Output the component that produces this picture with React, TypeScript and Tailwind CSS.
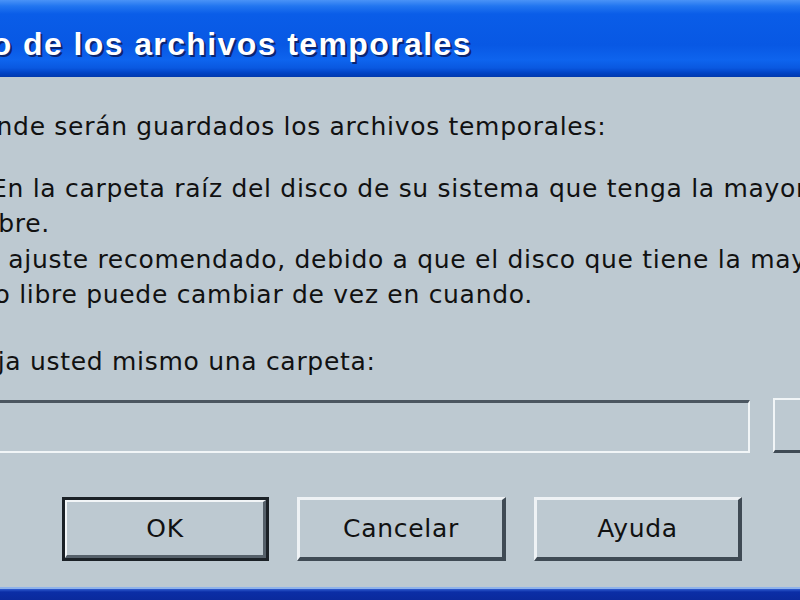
const bodyFont = "font-['DejaVu_Sans',sans-serif] text-[25px] tracking-[0.7px] leading-[35px] text-[#111111]";

function Line({ offset, children, className = "" }: { offset: string; children: React.ReactNode; className?: string }) {
  return <div className={`whitespace-nowrap ${offset} ${className}`}>{children}</div>;
}

function Button({ label, primary = false, width }: { label: string; primary?: boolean; width: string }) {
  if (primary) {
    return (
      <div className={`${width} h-[64px] border-[3px] border-[#1b2127]`}>
        <div className="h-full border-t-2 border-l-2 border-t-[#f2f5f7] border-l-[#f2f5f7] border-b-[3px] border-r-[3px] border-b-[#55606a] border-r-[#55606a] flex items-center justify-center">
          {label}
        </div>
      </div>
    );
  }
  return (
    <div
      className={`${width} h-[64px] border-t-[3px] border-l-[3px] border-t-[#eef2f5] border-l-[#eef2f5] border-b-[4px] border-r-[4px] border-b-[#3f4a54] border-r-[#3f4a54] flex items-center justify-center`}
    >
      {label}
    </div>
  );
}

export default function App() {
  return (
    <div className={`w-[800px] h-[600px] overflow-hidden flex flex-col bg-[#bdc9d1] ${bodyFont}`}>
      {/* barra de título */}
      <div className="h-[77px] shrink-0 bg-[linear-gradient(to_bottom,#4a93f7_0px,#2276f0_6px,#0a5de8_14px,#0858e4_45px,#0e64ee_60px,#0a58e0_68px,#0042c4_73px,#0038ae_77px)] pt-[28px] overflow-hidden">
        <div className="whitespace-nowrap -ml-[263px] font-['Liberation_Sans',Arial,sans-serif] font-bold text-[32px] leading-none tracking-[1.4px] text-white [text-shadow:2px_2px_0_#0b2570]">
          Almacenamiento de los archivos temporales
        </div>
      </div>

      {/* contenido */}
      <div className="flex-1 flex flex-col pt-[32px] overflow-hidden">
        <Line offset="-ml-[196px]">Especifique dónde serán guardados los archivos temporales:</Line>
        <Line offset="-ml-[9px]" className="mt-[27px]">
          En la carpeta raíz del disco de su sistema que tenga la mayor cantidad de espacio
        </Line>
        <Line offset="-ml-[17px]">libre.</Line>
        <Line offset="-ml-[128px]" className="mt-[1px]">
          Éste es el ajuste recomendado, debido a que el disco que tiene la mayor cantidad de
        </Line>
        <Line offset="-ml-[90px]">espacio libre puede cambiar de vez en cuando.</Line>
        <Line offset="-ml-[63px]" className="mt-[32px]">Escoja usted mismo una carpeta:</Line>

        <div className="flex mt-[21px]">
          <div className="-ml-[20px] w-[770px] h-[53px] shrink-0 border-t-[3px] border-t-[#4b5660] border-r-2 border-b-2 border-r-[#f1f5f7] border-b-[#f1f5f7]" />
          <div className="ml-[23px] -mt-[2px] w-[60px] h-[55px] shrink-0 border-t-2 border-l-2 border-t-[#f1f5f7] border-l-[#f1f5f7] border-b-[3px] border-b-[#3f4a54]" />
        </div>

        <div className="flex ml-[62px] mt-[44px] gap-[28px]">
          <Button label="OK" primary width="w-[207px]" />
          <Button label="Cancelar" width="w-[209px]" />
          <Button label="Ayuda" width="w-[208px]" />
        </div>
      </div>

      {/* borde inferior */}
      <div className="h-[13px] shrink-0 border-t-2 border-t-[#8fb2ea] bg-[linear-gradient(to_bottom,#2f5cd0_0px,#0b2ea6_3px,#0a2a9c_11px)]" />
    </div>
  );
}
